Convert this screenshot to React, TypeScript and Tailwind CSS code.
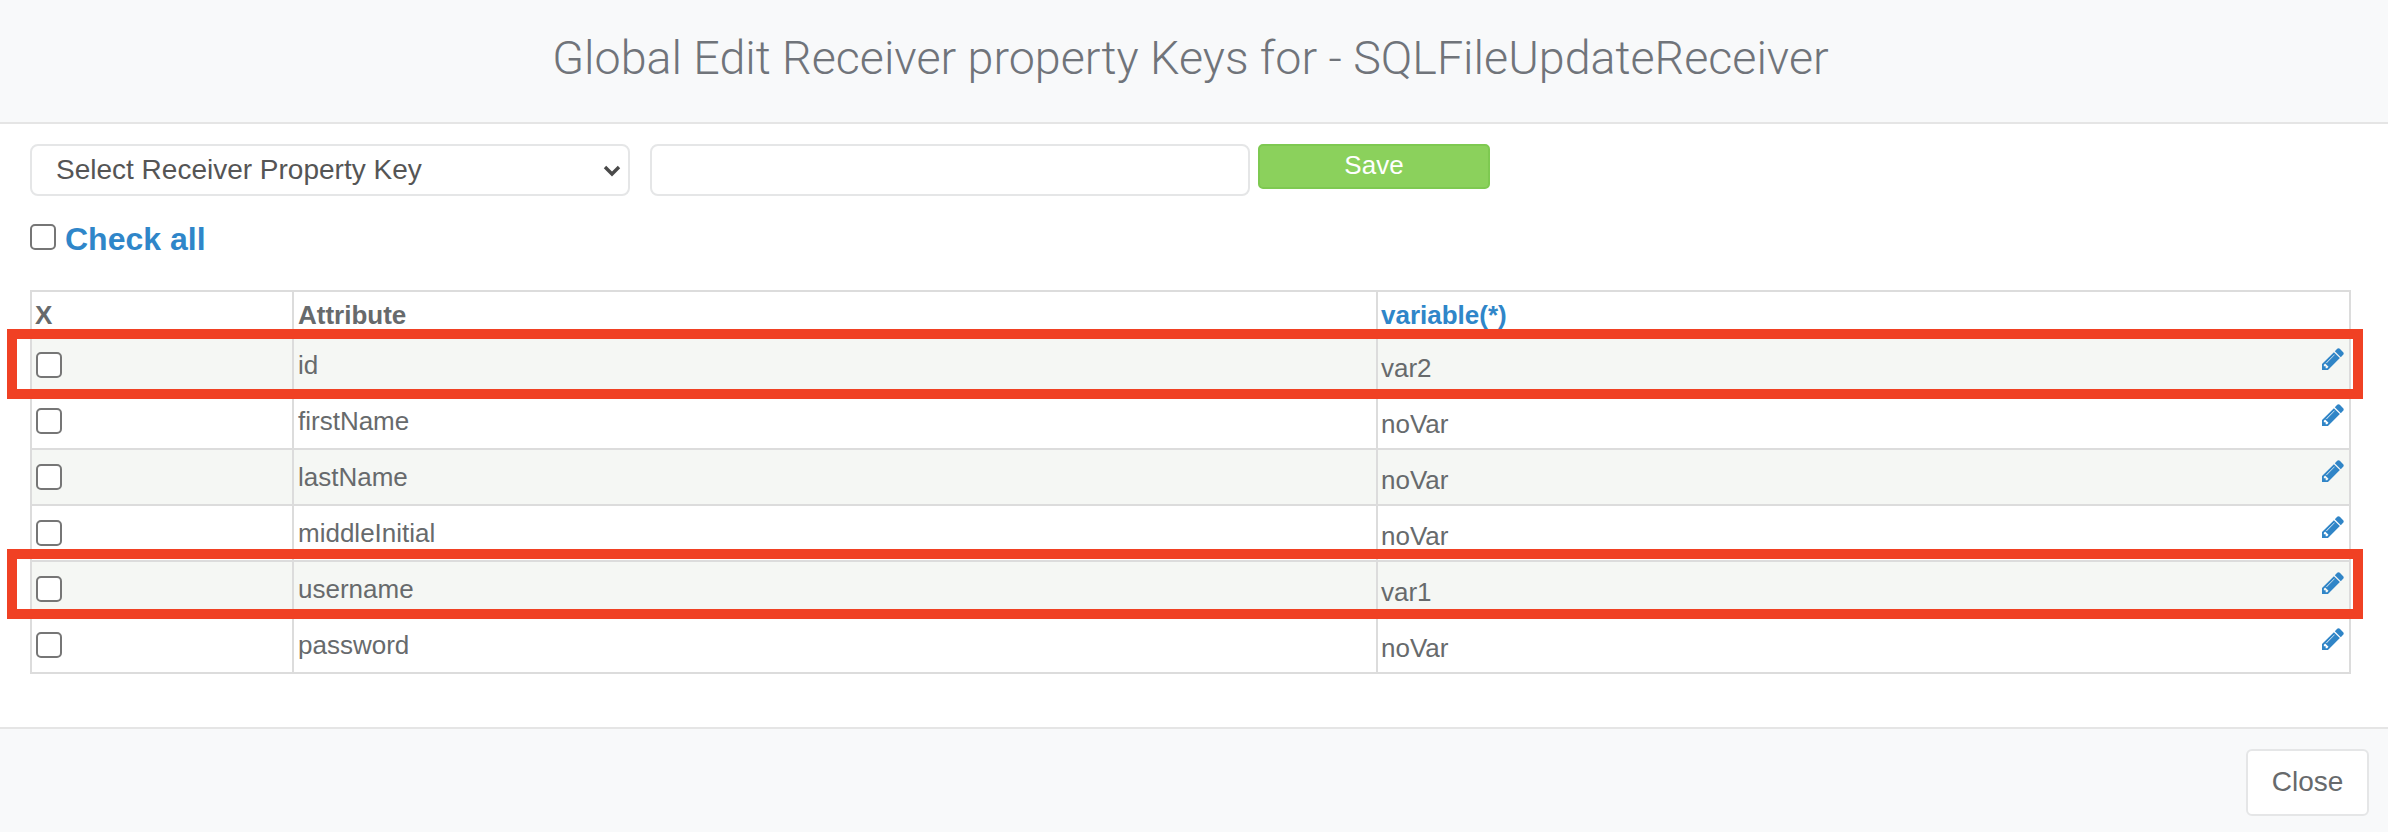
import React from "react";

const rows = [
  { name: "id", value: "var2", striped: true },
  { name: "firstName", value: "noVar", striped: false },
  { name: "lastName", value: "noVar", striped: true },
  { name: "middleInitial", value: "noVar", striped: false },
  { name: "username", value: "var1", striped: true },
  { name: "password", value: "noVar", striped: false },
];

function Pencil() {
  return (
    <svg viewBox="128 128 1536 1536" className="w-[22px] h-[22px] shrink-0 fill-[#3085c7]">
      <path d="M491 1536l91-91-235-235-91 91v107h128v128h107zm523-928q0-22-22-22-10 0-17 7l-542 542q-7 7-7 17 0 22 22 22 10 0 17-7l542-542q7-7 7-17zm-54-192l416 416-832 832h-416v-416zm683 96q0 53-37 90l-166 166-416-416 166-165q36-38 90-38 53 0 91 38l235 234q37 39 37 91z" />
    </svg>
  );
}

function Check() {
  return (
    <input
      type="checkbox"
      className="appearance-none block w-[26px] h-[26px] bg-white border-2 border-[#767676] rounded-[5px]"
    />
  );
}

export default function App() {
  return (
    <div
      className="w-[2388px] h-[832px] flex flex-col bg-white text-[26px] text-[#676a6c] overflow-hidden"
      style={{ fontFamily: '"Liberation Sans", Arial, sans-serif' }}
    >
      <header className="h-[124px] shrink-0 flex items-center justify-center bg-[#f8f9fa] border-b-2 border-[#e5e5e5] pb-[5px] pr-[7px]">
        <h1
          className="text-[46.6px] leading-none font-light text-[#70747a]"
          style={{ fontFamily: 'Roboto, "Liberation Sans", sans-serif' }}
        >
          Global Edit Receiver property Keys for - SQLFileUpdateReceiver
        </h1>
      </header>

      <main className="flex-1 pl-[30px] pr-[37px] pt-[20px]">
        <div className="flex items-start">
          <div className="relative w-[600px] h-[52px]">
            <select className="appearance-none w-full h-full pl-[24px] bg-white border-2 border-[#e5e6e7] rounded-[8px] text-[28px] text-[#555]">
              <option>Select Receiver Property Key</option>
            </select>
            <svg viewBox="0 0 18 12" className="absolute right-[9px] top-[21px] w-[18px] h-[12px] pointer-events-none">
              <path d="M2 2l7 7 7-7" fill="none" stroke="#4a4a4a" strokeWidth="3.4" />
            </svg>
          </div>
          <input
            type="text"
            className="ml-[20px] w-[600px] h-[52px] bg-white border-2 border-[#e5e6e7] rounded-[8px]"
          />
          <button className="ml-[8px] w-[232px] h-[45px] bg-[#8bd15c] border-2 border-[#7ec951] rounded-[5px] text-white text-[26px] leading-none pb-[4px]">
            Save
          </button>
        </div>

        <label className="mt-[28px] flex items-center h-[26px]">
          <Check />
          <span className="ml-[9px] mt-[4px] text-[32px] leading-none font-bold text-[#2f86c9]">Check all</span>
        </label>

        <div className="relative mt-[40px]">
          <table className="w-full table-fixed border-collapse border-2 border-[#dcdcdc]">
            <colgroup>
              <col className="w-[262px]" />
              <col className="w-[1084px]" />
              <col />
            </colgroup>
            <thead>
              <tr className="h-[46px]">
                <th className="border-2 border-[#dcdcdc] align-top text-left pl-[3px] pt-[10px] leading-[26px] font-bold">X</th>
                <th className="border-2 border-[#dcdcdc] align-top text-left pl-[4px] pt-[10px] leading-[26px] font-bold">Attribute</th>
                <th className="border-2 border-[#dcdcdc] align-top text-left pl-[3px] pt-[10px] leading-[26px] font-bold text-[#2f86c9]">
                  variable(*)
                </th>
              </tr>
            </thead>
            <tbody>
              {rows.map((r) => (
                <tr key={r.name} className={r.striped ? "h-[56px] bg-[#f5f7f4]" : "h-[56px]"}>
                  <td className="border-2 border-[#dcdcdc] align-top pl-[4px] pt-[14px]">
                    <Check />
                  </td>
                  <td className="border-2 border-[#dcdcdc] align-top pl-[4px] pt-[14px] leading-[26px]">{r.name}</td>
                  <td className="border-2 border-[#dcdcdc] align-top pl-[3px] pr-[5px]">
                    <div className="flex justify-between">
                      <span className="pt-[17px] leading-[26px]">{r.value}</span>
                      <span className="pt-[10px]">
                        <Pencil />
                      </span>
                    </div>
                  </td>
                </tr>
              ))}
            </tbody>
          </table>
          <div className="absolute left-[-23px] top-[39px] w-[2356px] h-[70px] border-[10px] border-[#f04124] pointer-events-none" />
          <div className="absolute left-[-23px] top-[259px] w-[2356px] h-[70px] border-[10px] border-[#f04124] pointer-events-none" />
        </div>
      </main>

      <footer className="h-[105px] shrink-0 flex items-center justify-end bg-[#f8f9fa] border-t-2 border-[#e5e5e5] pr-[19px] pt-[3px]">
        <button className="w-[123px] h-[67px] bg-white border-2 border-[#e5e6e7] rounded-[6px] text-[28px] text-[#676a6c]">
          Close
        </button>
      </footer>
    </div>
  );
}
